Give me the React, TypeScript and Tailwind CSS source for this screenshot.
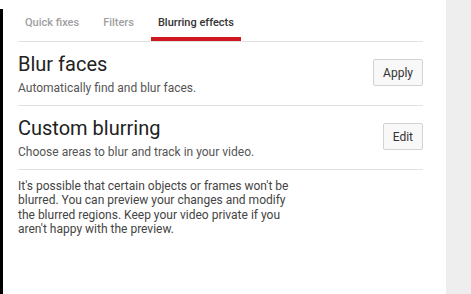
import React from 'react'

const font = { fontFamily: 'Roboto, "Noto Sans", Arial, sans-serif' }

type SectionProps = {
  title: string
  description: string
  action: string
}

function BlurSection({ title, description, action }: SectionProps) {
  return (
    <div className="flex h-[64px] items-start justify-between border-b border-[#e2e2e2]">
      <div className="pt-[10px]">
        <h2 className="text-[20px] leading-[24px] font-normal text-[#222222]">{title}</h2>
        <p className="mt-[4px] text-[12px] leading-[16px] text-[#555555]">{description}</p>
      </div>
      <button className="mt-[17px] h-[27px] rounded-[2px] border border-[#d3d3d3] bg-[#f8f8f8] px-[9px] text-[12px] font-normal text-[#333333]">
        {action}
      </button>
    </div>
  )
}

export default function App() {
  const tabs = ['Quick fixes', 'Filters', 'Blurring effects']
  const active = 'Blurring effects'

  return (
    <div className="flex h-[294px] w-[471px] bg-white" style={font}>
      <div className="mt-[9px] w-[3px] bg-black" />
      <div className="flex-1 pl-[15px] pr-[23px]">
        <div className="flex h-[42px] gap-[10px] border-b border-[#e2e2e2]">
          {tabs.map((tab) => (
            <div
              key={tab}
              className={`border-b-4 px-[7px] pt-[16px] pb-[8px] text-[11px] leading-[13px] font-medium ${
                tab === active ? 'border-[#cc181e] text-[#333333]' : 'border-transparent text-[#a0a0a0]'
              }`}
            >
              {tab}
            </div>
          ))}
        </div>
        <BlurSection title="Blur faces" description="Automatically find and blur faces." action="Apply" />
        <BlurSection
          title="Custom blurring"
          description="Choose areas to blur and track in your video."
          action="Edit"
        />
        <p className="w-[280px] pt-[9px] text-[12px] leading-[14.3px] text-[#444444]">
          It's possible that certain objects or frames won't be blurred. You can preview your changes and
          modify the blurred regions. Keep your video private if you aren't happy with the preview.
        </p>
      </div>
      <div className="w-[25px] bg-[#eeeeee]" />
    </div>
  )
}
